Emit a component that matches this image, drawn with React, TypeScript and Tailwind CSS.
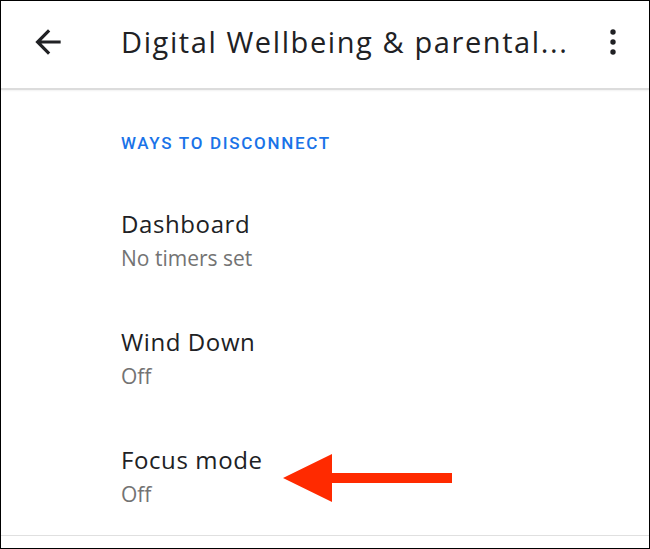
import React from "react"

const rows = [
  { title: "Dashboard", sub: "No timers set" },
  { title: "Wind Down", sub: "Off" },
  { title: "Focus mode", sub: "Off" },
]

function BackIcon() {
  return (
    <svg width="38" height="38" viewBox="0 0 24 24" fill="#202124">
      <path d="M20 11H7.83l5.59-5.59L12 4l-8 8 8 8 1.41-1.41L7.83 13H20v-2z" />
    </svg>
  )
}

function MoreIcon() {
  return (
    <svg width="40" height="40" viewBox="0 0 40 40" fill="#202124">
      <circle cx="20" cy="10" r="2.7" />
      <circle cx="20" cy="20" r="2.7" />
      <circle cx="20" cy="30" r="2.7" />
    </svg>
  )
}

export default function App() {
  return (
    <div className="relative flex h-[549px] w-[650px] flex-col border border-black bg-white font-['Open_Sans',sans-serif]">
      {/* Toolbar */}
      <header className="flex h-[87px] shrink-0 items-start">
        <div className="mt-[22px] w-[120px] shrink-0 pl-[28px]">
          <BackIcon />
        </div>
        <h1 className="mt-[26px] flex-1 text-[29px] leading-[29px] tracking-[0.055em] whitespace-nowrap text-[#202124]">
          Digital Wellbeing &amp; parental...
        </h1>
        <div className="mt-[21px] shrink-0 pr-[16px]">
          <MoreIcon />
        </div>
      </header>
      <div className="h-[2px] shrink-0 bg-[#dcdcdc] shadow-[0_1px_2px_rgba(0,0,0,0.06)]" />

      {/* Settings list */}
      <main className="flex flex-1 flex-col pl-[120px]">
        <div className="pt-[43px] pb-[56px] font-['Roboto',sans-serif] text-[17px] leading-5 font-medium tracking-[0.1em] text-[#1a73e8]">
          WAYS TO DISCONNECT
        </div>
        <div className="flex flex-col gap-[54px]">
          {rows.map((row) => (
            <div key={row.title} className="flex flex-col">
              <div className="text-[24px] leading-[30px] tracking-[0.025em] text-[#202124]">{row.title}</div>
              <div className="mt-[4px] text-[21px] leading-[30px] text-[#737373]">{row.sub}</div>
            </div>
          ))}
        </div>
      </main>
      <div className="mb-[12px] h-px shrink-0 bg-[#e0e0e0]" />

      {/* Annotation arrow */}
      <svg className="absolute top-[452px] left-[281px]" width="172" height="50" viewBox="0 0 172 50">
        <polygon points="1,25 50,1 50,20 170,20 170,30 50,30 50,49" fill="#ff2a00" />
      </svg>
    </div>
  )
}
